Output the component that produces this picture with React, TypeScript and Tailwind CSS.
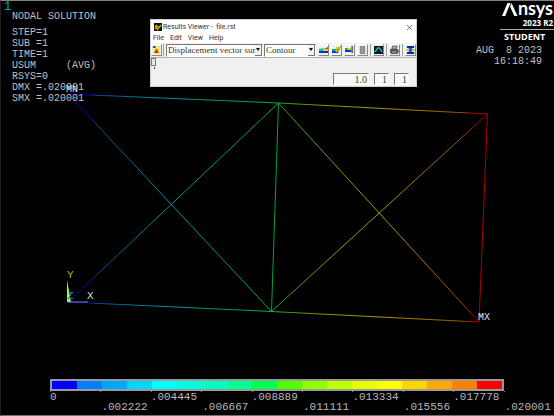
import type { ReactNode } from "react";

const bands = [
  "#0000ff", "#0080ff", "#00a8ff", "#00d4ff", "#00ffff", "#00ffe0",
  "#00ffc0", "#00ff90", "#00ff50", "#50ff00", "#90ff00", "#c0ff00",
  "#e4ff00", "#ffff00", "#ffd400", "#ffa800", "#ff8000", "#ff0000",
];

const levels = [
  "0", ".002222", ".004445", ".006667", ".008889",
  ".011111", ".013334", ".015556", ".017778", ".020001",
];

const solution = [
  "STEP=1",
  "SUB =1",
  "TIME=1",
  "USUM     (AVG)",
  "RSYS=0",
  "DMX =.020001",
  "SMX =.020001",
];

const stops: [number, string][] = [
  [0, "#0000a8"], [4, "#0000a8"], [7, "#00489a"], [15, "#006aa0"],
  [24, "#009098"], [38, "#009474"], [49, "#00b048"], [53, "#3c9c00"],
  [64, "#829c00"], [74, "#a89c00"], [86, "#a07000"], [94, "#9c4c00"],
  [97, "#b00000"], [100, "#b00000"],
];

function Truss() {
  return (
    <svg viewBox="0 0 554 416" className="absolute inset-0 h-full w-full" role="img" aria-label="Displacement plot">
      <defs>
        <linearGradient id="usum" gradientUnits="userSpaceOnUse" x1="68" y1="0" x2="487" y2="0">
          {stops.map(([at, color]) => (
            <stop key={at} offset={`${at}%`} stopColor={color} />
          ))}
        </linearGradient>
      </defs>
      <g fill="none" stroke="url(#usum)" strokeWidth="1">
        <path d="M68 94L278.5 103L487.5 114" />
        <path d="M68 302L271.5 311.5L479 322" />
        <path d="M68 94L271.5 311.5L487.5 114" />
        <path d="M68 302L278.5 103L479 322" />
        <path d="M278.5 103L271.5 311.5" stroke="#00a044" />
        <path d="M487.5 114L479 322" stroke="#b00000" />
      </g>
      <path d="M67 280L71 302H67Z" fill="#b4ff00" />
      <path d="M68 302H88" stroke="#8080ff" />
      <g fontFamily="'Liberation Mono', monospace" fontSize="11">
        <text x="67" y="278" fill="#9cc800">Y</text>
        <text x="67" y="299" fill="#0090c0">Z</text>
        <text x="87" y="299" fill="#d8d8d8">X</text>
      </g>
      <g fontFamily="'Liberation Mono', monospace" fontSize="10" fill="#e0e0e0">
        <text x="66" y="92">MN</text>
        <text x="478" y="320">MX</text>
      </g>
    </svg>
  );
}

function Tool({ label, children }: { label: string; children: ReactNode }) {
  return (
    <button
      type="button"
      aria-label={label}
      className="h-3 w-[11px] shrink-0 border border-t-white border-l-white border-r-[#888] border-b-[#888] bg-[#f0f0f0]"
    >
      <svg viewBox="0 0 10 10" preserveAspectRatio="none" className="h-full w-full">{children}</svg>
    </button>
  );
}

function Rule() {
  return <span className="h-3 w-px shrink-0 bg-[#a0a0a0]" />;
}

function Combo({ label, value, className }: { label: string; value: string; className: string }) {
  return (
    <div className={`relative h-[13px] shrink-0 border border-t-[#777] border-l-[#777] border-r-white border-b-white bg-white ${className}`}>
      <select
        aria-label={label}
        className="block h-full w-full appearance-none bg-transparent pr-[3px] pl-px font-['Liberation_Serif',serif] text-[9px] leading-[11px] text-[#333]"
      >
        <option>{value}</option>
      </select>
      <span className="pointer-events-none absolute inset-y-0 right-0 flex w-[7px] items-center justify-center border-r border-b border-[#777] bg-[#f0f0f0]">
        <svg viewBox="0 0 4 3" className="w-1">
          <path d="M0 0H4L2 3Z" fill="#111" />
        </svg>
      </span>
    </div>
  );
}

function Field({ label, value, className }: { label: string; value: string; className: string }) {
  return (
    <input
      aria-label={label}
      defaultValue={value}
      className={`h-3 border border-t-[#777] border-l-[#777] border-r-white border-b-white bg-[#f8f8f8] pr-px text-right font-['Liberation_Serif',serif] text-[10px] leading-[10px] text-[#444] ${className}`}
    />
  );
}

function ResultsViewer() {
  return (
    <section className="absolute top-[19px] left-[150px] flex w-[267px] flex-col border border-[#d0d0d0] bg-[#f0f0f0] font-[Roboto,sans-serif] text-[#333]">
      <div className="flex h-[14px] items-center bg-white pl-[3px] pr-1">
        <svg viewBox="0 0 8 8" className="mr-px h-2 w-2">
          <path d="M0 0H8V8H0Z" fill="#111" />
          <path d="M1 6L4 3M3 7L7 2M1 4L3 2" stroke="#f0b000" strokeWidth="1.3" />
        </svg>
        <h2 className="text-[7px] leading-none whitespace-pre">Results Viewer -  file.rst</h2>
        <button type="button" aria-label="Close" className="ml-auto">
          <svg viewBox="0 0 6 6" className="h-[5px] w-[5px]">
            <path d="M0 0L6 6M6 0L0 6" stroke="#555" strokeWidth="0.9" />
          </svg>
        </button>
      </div>
      <nav className="flex h-[9px] items-center gap-[6px] bg-white pl-[2px] text-[7px] leading-none">
        <button type="button">File</button>
        <button type="button">Edit</button>
        <button type="button">View</button>
        <button type="button">Help</button>
      </nav>
      <div className="flex h-[15px] items-center border-b border-[#b0b0b0]">
        <Tool label="Select result">
          <path d="M1 1H9V9H1Z" fill="#ffe860" />
          <path d="M1 1H4V3H1Z" fill="#2850d0" />
          <path d="M2 8L5 3L8 8Z" fill="#a07818" />
          <path d="M4 5H6V8H4Z" fill="#d03020" />
        </Tool>
        <span className="mx-px flex"><Rule /></span>
        <Combo label="Result item" value="Displacement vector sum" className="ml-px w-[97px]" />
        <Combo label="Plot type" value="Contour" className="ml-px w-[52px]" />
        <div className="ml-[2px] flex items-center gap-[2px]">
          <Tool label="Plot results">
            <path d="M0 6L10 2V6Z" fill="#ffd000" />
            <path d="M6 4L10 2V4H6Z" fill="#f03000" />
            <path d="M0 4L5 3V6H0Z" fill="#00d090" />
            <path d="M0 6H10V8H0Z" fill="#0030e0" />
          </Tool>
          <Tool label="Query results">
            <path d="M0 4H6V6H0Z" fill="#00b060" />
            <path d="M0 6H7V8H0Z" fill="#0030e0" />
            <path d="M4 2H9V4L6 7H4Z" fill="#e8c800" />
            <path d="M5 4L7 6L10 1" stroke="#555" strokeWidth="0.7" fill="none" />
          </Tool>
          <Tool label="Animate results">
            <path d="M0 3H6V5H0Z" fill="#00c060" />
            <path d="M0 5H7V7H0Z" fill="#0030e0" />
            <path d="M3 3H7V5H3Z" fill="#e8d000" />
            <path d="M7 1H9V8H7Z" fill="#606878" />
          </Tool>
          <Tool label="List results">
            <path d="M2 1H8V9H2Z" fill="#888" />
            <path d="M3 3H7M3 5H7M3 7H7" stroke="#bbb" strokeWidth="0.6" />
          </Tool>
          <Rule />
          <Tool label="Capture image">
            <path d="M0 1H10V9H0Z" fill="#101820" />
            <path d="M1 7L4 3H6L9 7" stroke="#00c8c0" strokeWidth="1.4" fill="none" />
          </Tool>
          <Rule />
          <Tool label="Print">
            <path d="M3 1H8L7 4H2Z" fill="#aaa" stroke="#444" strokeWidth="0.7" />
            <path d="M0 4H9L10 7L8 9H1L0 7Z" fill="#555" />
            <path d="M2 7H7" stroke="#ddd" strokeWidth="0.8" />
          </Tool>
          <Rule />
          <Tool label="Report">
            <path d="M1 1H9V3H1ZM1 7H9V9H1Z" fill="#0828a0" />
            <path d="M3 3H7V7H3Z" fill="#2060e0" />
            <path d="M0 4H3V6H0ZM7 4H10V6H7Z" fill="#e0c040" />
          </Tool>
        </div>
      </div>
      <div className="relative h-[9px]">
        <input type="range" aria-label="Data set" defaultValue={0} className="absolute inset-0 h-full w-full opacity-0" />
        <span className="pointer-events-none block h-2 w-[5px] border border-[#777] bg-[#e8e8e8]" />
      </div>
      <span className="ml-[3px] h-[2px] w-px bg-[#555]" />
      <div className="mt-1 mb-px flex justify-end gap-[5px] pr-[7px]">
        <Field label="Time" value="1.0" className="w-9" />
        <Field label="Load step" value="1" className="w-[15px]" />
        <Field label="Substep" value="1" className="w-[15px]" />
      </div>
    </section>
  );
}

function Brand() {
  return (
    <div className="flex flex-col items-end font-['Open_Sans',sans-serif] text-white">
      <div className="flex h-4 items-end pr-px font-[Lato,sans-serif]" role="img" aria-label="Ansys">
        <svg viewBox="0 0 16 13" className="mb-px h-[13px] w-4">
          <path d="M0 13L5.5 0H8.5L3.2 13Z" fill="#fff" />
          <path d="M8 3.5L9.5 0L15.5 13H12.3Z" fill="#fff" />
        </svg>
        <span className="text-[18px] leading-[18px] font-bold">nsys</span>
      </div>
      <span className="pr-px text-[8px] leading-[12px] font-bold">2023 R2</span>
      <div className="w-[54px] border-t border-[#aaa] pl-1 text-[9px] leading-[14px] font-bold">STUDENT</div>
      <time className="mt-px pr-3 text-right font-['Liberation_Mono',monospace] text-[10px] leading-[11px] whitespace-pre text-[#c0c0c0]">
        {"AUG  8 2023\n16:18:49"}
      </time>
    </div>
  );
}

function Legend() {
  return (
    <footer className="relative pl-[50px] font-['Liberation_Mono',monospace] text-[11px] leading-[10px] text-[#b8b8b8]">
      <div className="grid grid-cols-10">
        <div className="col-span-9 flex h-3 border-2 border-[#9a9a9a]">
          {bands.map((color) => (
            <span key={color} className="flex-1" style={{ backgroundColor: color }} />
          ))}
        </div>
      </div>
      <ol className="grid h-[25px] grid-cols-10">
        {levels.map((level, i) => (
          <li key={level}>
            <span className="block h-px w-px bg-[#888]" />
            <span className={i % 2 ? "block pt-[10px] pl-px" : "block"}>{level}</span>
          </li>
        ))}
      </ol>
    </footer>
  );
}

export default function App() {
  return (
    <main className="relative flex min-h-screen flex-col overflow-hidden bg-black pt-px">
      <Truss />
      <header className="relative flex justify-between pl-1 font-['Liberation_Mono',monospace] text-[10px] leading-[11px] text-[#c0c0c0]">
        <div>
          <p className="h-[10px] text-[12px] leading-[12px] text-[#00a8a8]">1</p>
          <h1 className="pl-2">NODAL SOLUTION</h1>
          <pre className="mt-[5px] pl-2 font-['Liberation_Mono',monospace]">{solution.join("\n")}</pre>
        </div>
        <Brand />
      </header>
      <div className="flex-1" />
      <Legend />
      <ResultsViewer />
      <div className="pointer-events-none absolute inset-0 border-t border-b border-l border-t-[#808080] border-b-[#707070] border-l-[#202020]" />
    </main>
  );
}
